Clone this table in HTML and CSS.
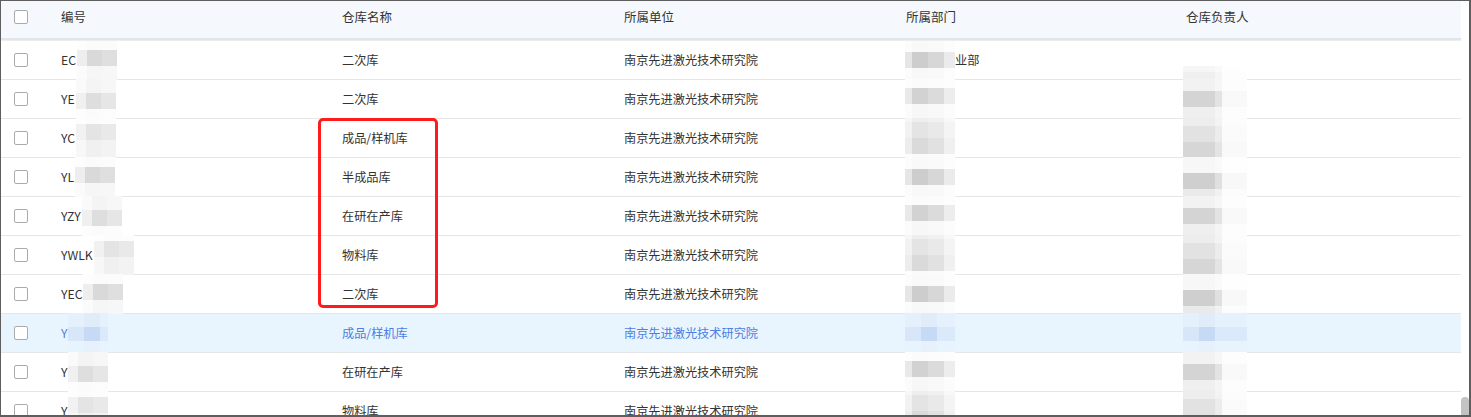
FILE: index.html
```html
<!DOCTYPE html>
<html lang="zh-CN">
<head>
<meta charset="utf-8">
<title>仓库列表</title>
<link rel="stylesheet" href="styles.css">
</head>
<body>
<div class="frame">
  <div class="table">
    <div class="row head">
      <div class="cell chk"><span class="box"></span></div>
      <div class="cell">编号</div>
      <div class="cell">仓库名称</div>
      <div class="cell">所属单位</div>
      <div class="cell">所属部门</div>
      <div class="cell">仓库负责人</div>
    </div>
    <div class="body">
      <div class="row first">
        <div class="cell chk"><span class="box"></span></div>
        <div class="cell code">EC<span class="mos mos-code v1"></span></div>
        <div class="cell">二次库</div>
        <div class="cell">南京先进激光技术研究院</div>
        <div class="cell"><span class="mos mos-dept v1"></span><span class="tail">业部</span></div>
        <div class="cell"><span class="mos mos-owner v0"></span></div>
      </div>
      <div class="row">
        <div class="cell chk"><span class="box"></span></div>
        <div class="cell code">YE<span class="mos mos-code v2"></span></div>
        <div class="cell">二次库</div>
        <div class="cell">南京先进激光技术研究院</div>
        <div class="cell"><span class="mos mos-dept v2"></span></div>
        <div class="cell"><span class="mos mos-owner v1"></span></div>
      </div>
      <div class="row">
        <div class="cell chk"><span class="box"></span></div>
        <div class="cell code">YC<span class="mos mos-code v3"></span></div>
        <div class="cell">成品/样机库</div>
        <div class="cell">南京先进激光技术研究院</div>
        <div class="cell"><span class="mos mos-dept v3"></span></div>
        <div class="cell"><span class="mos mos-owner v2"></span></div>
      </div>
      <div class="row">
        <div class="cell chk"><span class="box"></span></div>
        <div class="cell code">YL<span class="mos mos-code v1"></span></div>
        <div class="cell">半成品库</div>
        <div class="cell">南京先进激光技术研究院</div>
        <div class="cell"><span class="mos mos-dept v1"></span></div>
        <div class="cell"><span class="mos mos-owner v3"></span></div>
      </div>
      <div class="row">
        <div class="cell chk"><span class="box"></span></div>
        <div class="cell code">YZY<span class="mos mos-code v2"></span></div>
        <div class="cell">在研在产库</div>
        <div class="cell">南京先进激光技术研究院</div>
        <div class="cell"><span class="mos mos-dept v2"></span></div>
        <div class="cell"><span class="mos mos-owner v1"></span></div>
      </div>
      <div class="row">
        <div class="cell chk"><span class="box"></span></div>
        <div class="cell code">YWLK<span class="mos mos-code v3"></span></div>
        <div class="cell">物料库</div>
        <div class="cell">南京先进激光技术研究院</div>
        <div class="cell"><span class="mos mos-dept v3"></span></div>
        <div class="cell"><span class="mos mos-owner v2"></span></div>
      </div>
      <div class="row">
        <div class="cell chk"><span class="box"></span></div>
        <div class="cell code">YEC<span class="mos mos-code v1"></span></div>
        <div class="cell">二次库</div>
        <div class="cell">南京先进激光技术研究院</div>
        <div class="cell"><span class="mos mos-dept v1"></span></div>
        <div class="cell"><span class="mos mos-owner v3"></span></div>
      </div>
      <div class="row active">
        <div class="cell chk"><span class="box"></span></div>
        <div class="cell code">Y<span class="mos mos-code"></span></div>
        <div class="cell">成品/样机库</div>
        <div class="cell">南京先进激光技术研究院</div>
        <div class="cell"><span class="mos mos-dept"></span></div>
        <div class="cell"><span class="mos mos-owner"></span></div>
      </div>
      <div class="row">
        <div class="cell chk"><span class="box"></span></div>
        <div class="cell code">Y<span class="mos mos-code v2"></span></div>
        <div class="cell">在研在产库</div>
        <div class="cell">南京先进激光技术研究院</div>
        <div class="cell"><span class="mos mos-dept v2"></span></div>
        <div class="cell"><span class="mos mos-owner v1"></span></div>
      </div>
      <div class="row">
        <div class="cell chk"><span class="box"></span></div>
        <div class="cell code">Y<span class="mos mos-code v3"></span></div>
        <div class="cell">物料库</div>
        <div class="cell">南京先进激光技术研究院</div>
        <div class="cell"><span class="mos mos-dept v3"></span></div>
        <div class="cell"><span class="mos mos-owner v2"></span></div>
      </div>
    </div>
  </div>
  <div class="scroll-thumb"></div>
  <div class="mark"></div>
</div>
</body>
</html>
```

FILE: styles.css
```css
* { box-sizing: border-box; }

html, body {
  margin: 0;
  padding: 0;
  background: #ffffff;
}

body {
  font-family: "Noto Sans CJK SC", "Noto Sans", "Liberation Sans", sans-serif;
  font-size: 12.2px;
  color: #333333;
}

.frame {
  position: relative;
  width: 1471px;
  height: 417px;
  border: 1px solid #5e5e5e;
  border-right-width: 2px;
  border-bottom-width: 2px;
  overflow: hidden;
  background: #ffffff;
}

.table {
  width: 1460px;
}

.row {
  display: grid;
  grid-template-columns: 48px 281px 282px 282px 280px 287px;
  height: 39px;
  border-bottom: 1px solid #e6e6e6;
  background: #ffffff;
}

.row.head {
  height: 39px;
  background: #f5f9fd;
  border-bottom: 2px solid #dde6ef;
  box-shadow: 0 1px 0 #efece9;
  position: relative;
  z-index: 1;
  font-size: 12.5px;
}

.row.head .cell {
  padding-bottom: 5px;
}

.row.first {
  margin-top: 1px;
}

.row.active {
  background: #e8f5fe;
  color: #4d7ee3;
}

.cell {
  position: relative;
  display: flex;
  align-items: center;
  padding-left: 12px;
  white-space: nowrap;
  line-height: 1;
}

.cell.chk {
  padding-left: 13px;
}

.box {
  display: block;
  width: 14px;
  height: 14px;
  border: 1px solid #ababab;
  border-radius: 2px;
  background: #ffffff;
}

/* mosaic redactions laid over the masked values */
.mos {
  position: absolute;
  top: -1px;
  bottom: -1px;
}

.mos-code {
  position: relative;
  top: auto;
  bottom: auto;
  align-self: stretch;
  width: 40px;
  margin: -1px 0 -1px 1px;
  background:
    linear-gradient(to right, rgba(255,255,255,.55) 0 10px, rgba(255,255,255,0) 10px 25px, rgba(255,255,255,.15) 25px 40px),
    linear-gradient(to bottom, #fbfbfb 0 10px, #d9d9d9 10px 26px, #f6f6f6 26px);
}
.mos-code.v2 {
  background:
    linear-gradient(to right, rgba(255,255,255,.55) 0 10px, rgba(255,255,255,0) 10px 25px, rgba(255,255,255,.25) 25px 40px),
    linear-gradient(to bottom, #f4f4f4 0 14px, #dedede 14px 30px, #fbfbfb 30px);
}
.mos-code.v3 {
  background:
    linear-gradient(to right, rgba(255,255,255,.5) 0 10px, rgba(255,255,255,0) 10px 25px, rgba(255,255,255,.2) 25px 40px),
    linear-gradient(to bottom, #fcfcfc 0 6px, #e4e4e4 6px 22px, #f0f0f0 22px);
}

.mos-dept {
  left: 11px;
  width: 50px;
  background:
    linear-gradient(to right, rgba(255,255,255,.5) 0 7px, rgba(255,255,255,0) 7px 23px, rgba(255,255,255,.2) 23px 39px, rgba(255,255,255,.6) 39px),
    linear-gradient(to bottom, #f9f9f9 0 12px, #cdcdcd 12px 28px, #f8f8f8 28px);
}
.mos-dept.v2 {
  background:
    linear-gradient(to right, rgba(255,255,255,.5) 0 7px, rgba(255,255,255,0) 7px 23px, rgba(255,255,255,.2) 23px 39px, rgba(255,255,255,.6) 39px),
    linear-gradient(to bottom, #fbfbfb 0 9px, #d2d2d2 9px 25px, #f7f7f7 25px);
}
.mos-dept.v3 {
  background:
    linear-gradient(to right, rgba(255,255,255,.5) 0 7px, rgba(255,255,255,0) 7px 23px, rgba(255,255,255,.2) 23px 39px, rgba(255,255,255,.6) 39px),
    linear-gradient(to bottom, #eeeeee 0 4px, #e4e4e4 4px 20px, #dadada 20px 36px, #fafafa 36px);
}

.tail {
  margin-left: 49px;
}

.mos-owner {
  left: 9px;
  width: 64px;
  background:
    linear-gradient(to right, rgba(255,255,255,0) 0 32px, rgba(255,255,255,.35) 32px 39px, rgba(255,255,255,.85) 39px),
    linear-gradient(to bottom, #f2f2f2 0 12px, #d4d4d4 12px 28px, #efefef 28px);
}
.mos-owner.v0 {
  background:
    linear-gradient(to right, rgba(255,255,255,0) 0 32px, rgba(255,255,255,.4) 32px 39px, rgba(255,255,255,.9) 39px),
    linear-gradient(to bottom, #ffffff 0 26px, #f6f6f6 26px 32px, #efefef 32px);
}
.mos-owner.v2 {
  background:
    linear-gradient(to right, rgba(255,255,255,0) 0 32px, rgba(255,255,255,.35) 32px 39px, rgba(255,255,255,.85) 39px),
    linear-gradient(to bottom, #ededed 0 8px, #e2e2e2 8px 24px, #d6d6d6 24px);
}
.mos-owner.v3 {
  background:
    linear-gradient(to right, rgba(255,255,255,0) 0 32px, rgba(255,255,255,.35) 32px 39px, rgba(255,255,255,.85) 39px),
    linear-gradient(to bottom, #f7f7f7 0 16px, #cfcfcf 16px 32px, #eaeaea 32px);
}

.row.active .mos-code,
.row.active .mos-dept,
.row.active .mos-owner {
  background:
    linear-gradient(to right, rgba(232,245,254,.5) 0 16px, rgba(232,245,254,0) 16px 32px, rgba(232,245,254,.6) 32px),
    linear-gradient(to bottom, #e0ecfa 0 14px, #c6d9f5 14px 28px, #e6f1fc 28px);
}

.scroll-thumb {
  position: absolute;
  left: 1460px;
  top: 396px;
  width: 8px;
  height: 30px;
  border-radius: 4px;
  background: #c3c3c3;
}

.mark {
  position: absolute;
  left: 317px;
  top: 117px;
  width: 120px;
  height: 190px;
  border: 3px solid #ff1b1b;
  border-radius: 5px;
}
```
